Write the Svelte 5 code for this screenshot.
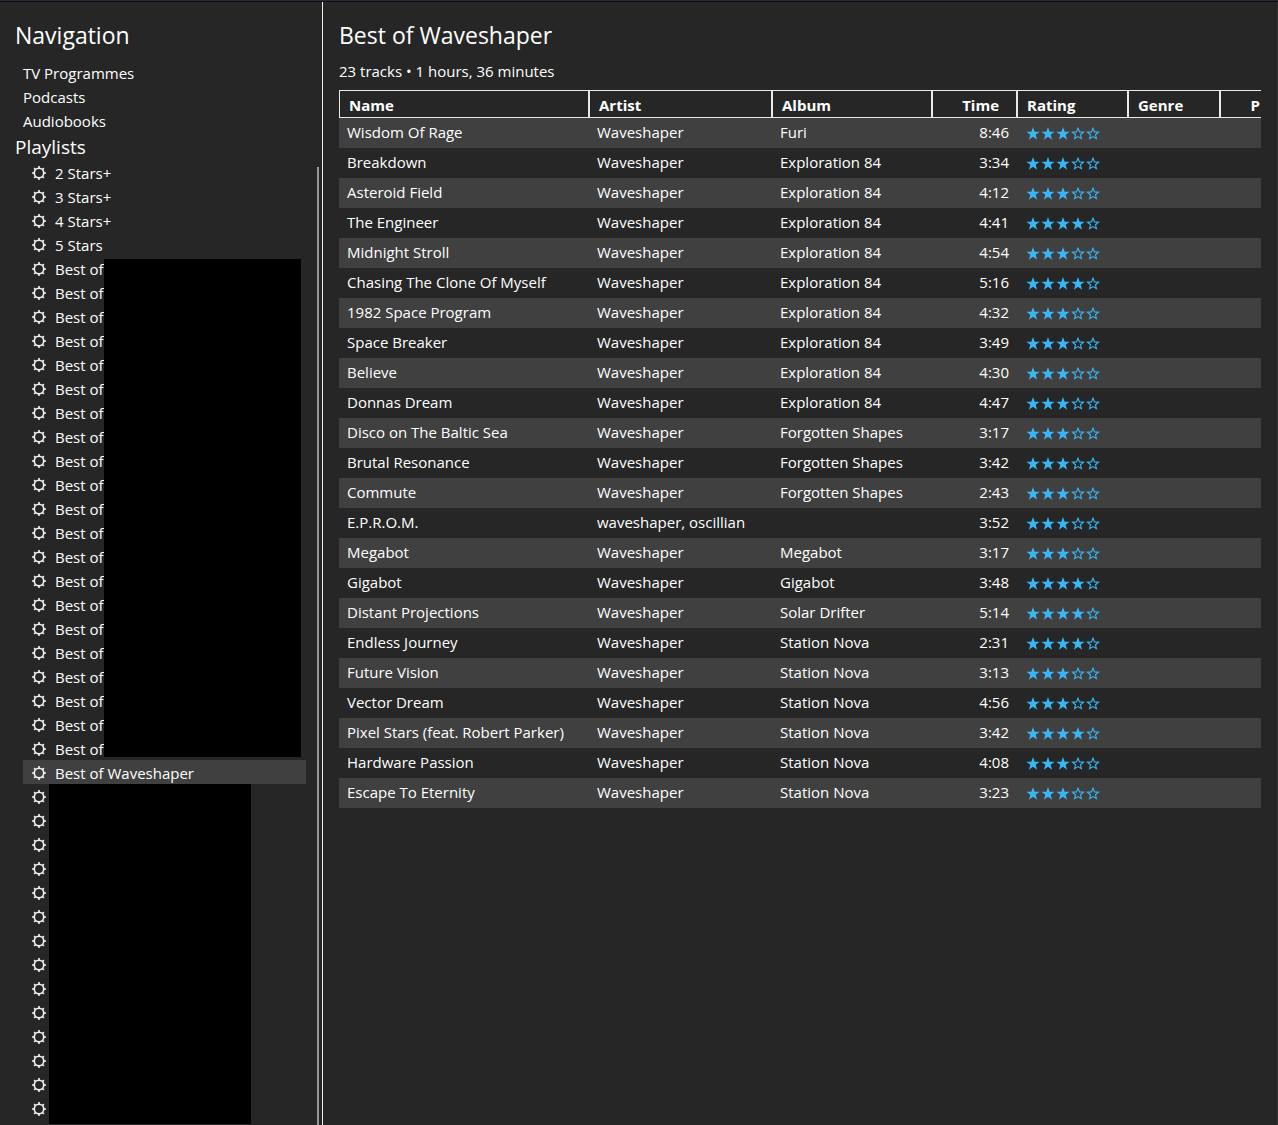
<script>
  const sections = ['TV Programmes', 'Podcasts', 'Audiobooks'];
  const starLists = ['2 Stars+', '3 Stars+', '4 Stars+', '5 Stars'];
  const bestOf = Array.from({ length: 21 }, () => 'Best of');
  const hidden = Array.from({ length: 14 }, (_, i) => i);

  const W = 'Waveshaper';
  const E = 'Exploration 84';
  const F = 'Forgotten Shapes';
  const S = 'Station Nova';
  const tracks = [
    ['Wisdom Of Rage', W, 'Furi', '8:46', 3],
    ['Breakdown', W, E, '3:34', 3],
    ['Asteroid Field', W, E, '4:12', 3],
    ['The Engineer', W, E, '4:41', 4],
    ['Midnight Stroll', W, E, '4:54', 3],
    ['Chasing The Clone Of Myself', W, E, '5:16', 4],
    ['1982 Space Program', W, E, '4:32', 3],
    ['Space Breaker', W, E, '3:49', 3],
    ['Believe', W, E, '4:30', 3],
    ['Donnas Dream', W, E, '4:47', 3],
    ['Disco on The Baltic Sea', W, F, '3:17', 3],
    ['Brutal Resonance', W, F, '3:42', 3],
    ['Commute', W, F, '2:43', 3],
    ['E.P.R.O.M.', 'waveshaper, oscillian', '', '3:52', 3],
    ['Megabot', W, 'Megabot', '3:17', 3],
    ['Gigabot', W, 'Gigabot', '3:48', 4],
    ['Distant Projections', W, 'Solar Drifter', '5:14', 4],
    ['Endless Journey', W, S, '2:31', 4],
    ['Future Vision', W, S, '3:13', 3],
    ['Vector Dream', W, S, '4:56', 3],
    ['Pixel Stars (feat. Robert Parker)', W, S, '3:42', 4],
    ['Hardware Passion', W, S, '4:08', 3],
    ['Escape To Eternity', W, S, '3:23', 3],
  ];

  const starPoints = (r, inner) =>
    Array.from({ length: 10 }, (_, i) => {
      const d = i % 2 ? inner : r;
      const a = (i * Math.PI) / 5 - Math.PI / 2;
      return `${(8 + d * Math.cos(a)).toFixed(2)},${(8 + d * Math.sin(a)).toFixed(2)}`;
    }).join(' ');
  const solid = starPoints(7, 2.8);
  const outline = starPoints(5.8, 2.6);
  const teeth = [0, 45, 90, 135, 180, 225, 270, 315];
</script>

{#snippet gear()}
  <svg class="gear" viewBox="0 0 16 16" aria-hidden="true">
    <circle cx="8" cy="8" r="4.7" />
    {#each teeth as angle}
      <path d="M8 3.4V1.1" transform="rotate({angle} 8 8)" />
    {/each}
  </svg>
{/snippet}

{#snippet playlist(name, current)}
  <li>
    <a class="row item" class:current href="#playlist" aria-current={current ? 'page' : undefined} aria-label={name || 'Playlist'}>
      {@render gear()}
      <span>{name}</span>
    </a>
  </li>
{/snippet}

<div class="app">
  <nav class="sidebar">
    <h1>Navigation</h1>
    <ul class="sections">
      {#each sections as section}
        <li><a class="row" href="#section">{section}</a></li>
      {/each}
    </ul>
    <h2>Playlists</h2>
    <div class="scroller">
      <div class="lists">
        <ul>
          {#each starLists as name}{@render playlist(name, false)}{/each}
        </ul>
        <div class="group">
          <ul>
            {#each bestOf as name}{@render playlist(name, false)}{/each}
          </ul>
          <div class="cover names"></div>
        </div>
        <ul>{@render playlist('Best of Waveshaper', true)}</ul>
        <div class="group">
          <ul>
            {#each hidden as _}{@render playlist('', false)}{/each}
          </ul>
          <div class="cover entries"></div>
        </div>
      </div>
      <div class="thumb"></div>
    </div>
  </nav>

  <main>
    <h1>Best of Waveshaper</h1>
    <p>23 tracks • 1 hours, 36 minutes</p>
    <div class="tracks">
      <table>
        <colgroup>
          <col class="c-name" /><col class="c-artist" /><col class="c-album" /><col class="c-time" />
          <col class="c-rating" /><col class="c-genre" /><col />
        </colgroup>
        <thead>
          <tr>
            <th>Name</th>
            <th>Artist</th>
            <th>Album</th>
            <th class="time">Time</th>
            <th>Rating</th>
            <th>Genre</th>
            <th class="last">P</th>
          </tr>
        </thead>
        <tbody>
          {#each tracks as [name, artist, album, time, rating]}
            <tr>
              <td>{name}</td>
              <td>{artist}</td>
              <td>{album}</td>
              <td class="time">{time}</td>
              <td>
                <span class="stars" role="img" aria-label="{rating} of 5 stars">
                  {#each [1, 2, 3, 4, 5] as n}
                    <svg viewBox="0 0 15 16" aria-hidden="true">
                      {#if n <= rating}
                        <polygon class="solid" points={solid} />
                      {:else}
                        <polygon class="outline" points={outline} />
                      {/if}
                    </svg>
                  {/each}
                </span>
              </td>
              <td></td>
              <td></td>
            </tr>
          {/each}
        </tbody>
      </table>
    </div>
  </main>
</div>

<style>
  :global(body) {
    background: #262626;
  }
  .app {
    box-sizing: border-box;
    display: flex;
    height: 100vh;
    overflow: hidden;
    border-top: 1px solid #2b2b38;
    box-shadow: inset 0 1px #0c0c10, inset -1px 0 #333;
    color: #fff;
    font-family: 'Segoe UI', 'Open Sans', 'Noto Sans', sans-serif;
    font-size: 15px;
    line-height: 24px;
  }
  h1,
  h2,
  p,
  ul {
    margin: 0;
    padding: 0;
    font-weight: 400;
  }
  ul {
    list-style: none;
  }
  h1 {
    font-size: 23px;
    line-height: 32px;
  }
  h2 {
    padding: 3px 0 0 15px;
    font-size: 19px;
    line-height: 25px;
  }
  .sidebar {
    box-sizing: border-box;
    flex: none;
    display: flex;
    flex-direction: column;
    width: 323px;
    margin-top: 1px;
    padding-top: 17px;
    border-right: 1px solid #f0f0f0;
  }
  .sidebar h1 {
    padding: 0 15px 9px;
  }
  .sections {
    padding-left: 15px;
  }
  .row {
    display: flex;
    align-items: center;
    height: 24px;
    padding: 1px 8px 0;
    box-sizing: border-box;
    color: inherit;
    text-decoration: none;
    white-space: nowrap;
  }
  .scroller {
    flex: 1;
    min-height: 0;
    display: flex;
    justify-content: space-between;
    padding: 0 3px 0 23px;
  }
  .lists {
    flex: 1;
    margin-right: 11px;
  }
  .item {
    gap: 8px;
  }
  .current {
    background: #404040;
  }
  .gear {
    flex: none;
    width: 16px;
    height: 16px;
    fill: none;
    stroke: #f4f4f4;
    stroke-width: 1.6;
  }
  .group {
    position: relative;
  }
  .cover {
    position: absolute;
    background: #000;
  }
  .names {
    inset: 3px 5px 3px 81px;
  }
  .entries {
    inset: 0 55px -4px 26px;
  }
  .thumb {
    width: 2px;
    margin-top: 7px;
    background: #989898;
  }
  main {
    flex: 1;
    min-width: 0;
    padding: 18px 17px 0 16px;
  }
  main p {
    padding: 8px 0 7px;
  }
  .tracks {
    overflow: hidden;
  }
  table {
    width: 100%;
    table-layout: fixed;
    border-spacing: 0;
  }
  .c-name { width: 250px; }
  .c-artist { width: 183px; }
  .c-album { width: 160px; }
  .c-time { width: 85px; }
  .c-rating { width: 111px; }
  .c-genre { width: 92px; }
  th {
    box-sizing: border-box;
    height: 28px;
    padding: 2px 9px 0;
    border: 1px solid #e8e8e8;
    text-align: left;
    font-weight: 700;
    line-height: 24px;
  }
  th.time {
    padding-right: 17px;
  }
  th.last {
    padding: 2px 1px 0 0;
    border-right: 0;
    text-align: right;
  }
  td {
    height: 30px;
    padding: 0 8px 2px;
    box-sizing: border-box;
    white-space: nowrap;
  }
  .time {
    text-align: right;
  }
  tbody tr:nth-child(odd) {
    background: #404040;
  }
  .stars {
    display: flex;
    padding-top: 4px;
  }
  .stars svg {
    width: 15px;
    height: 16px;
    overflow: visible;
  }
  .solid {
    fill: #38b6f5;
  }
  .outline {
    fill: none;
    stroke: #38b6f5;
    stroke-width: 1.1;
  }
</style>
